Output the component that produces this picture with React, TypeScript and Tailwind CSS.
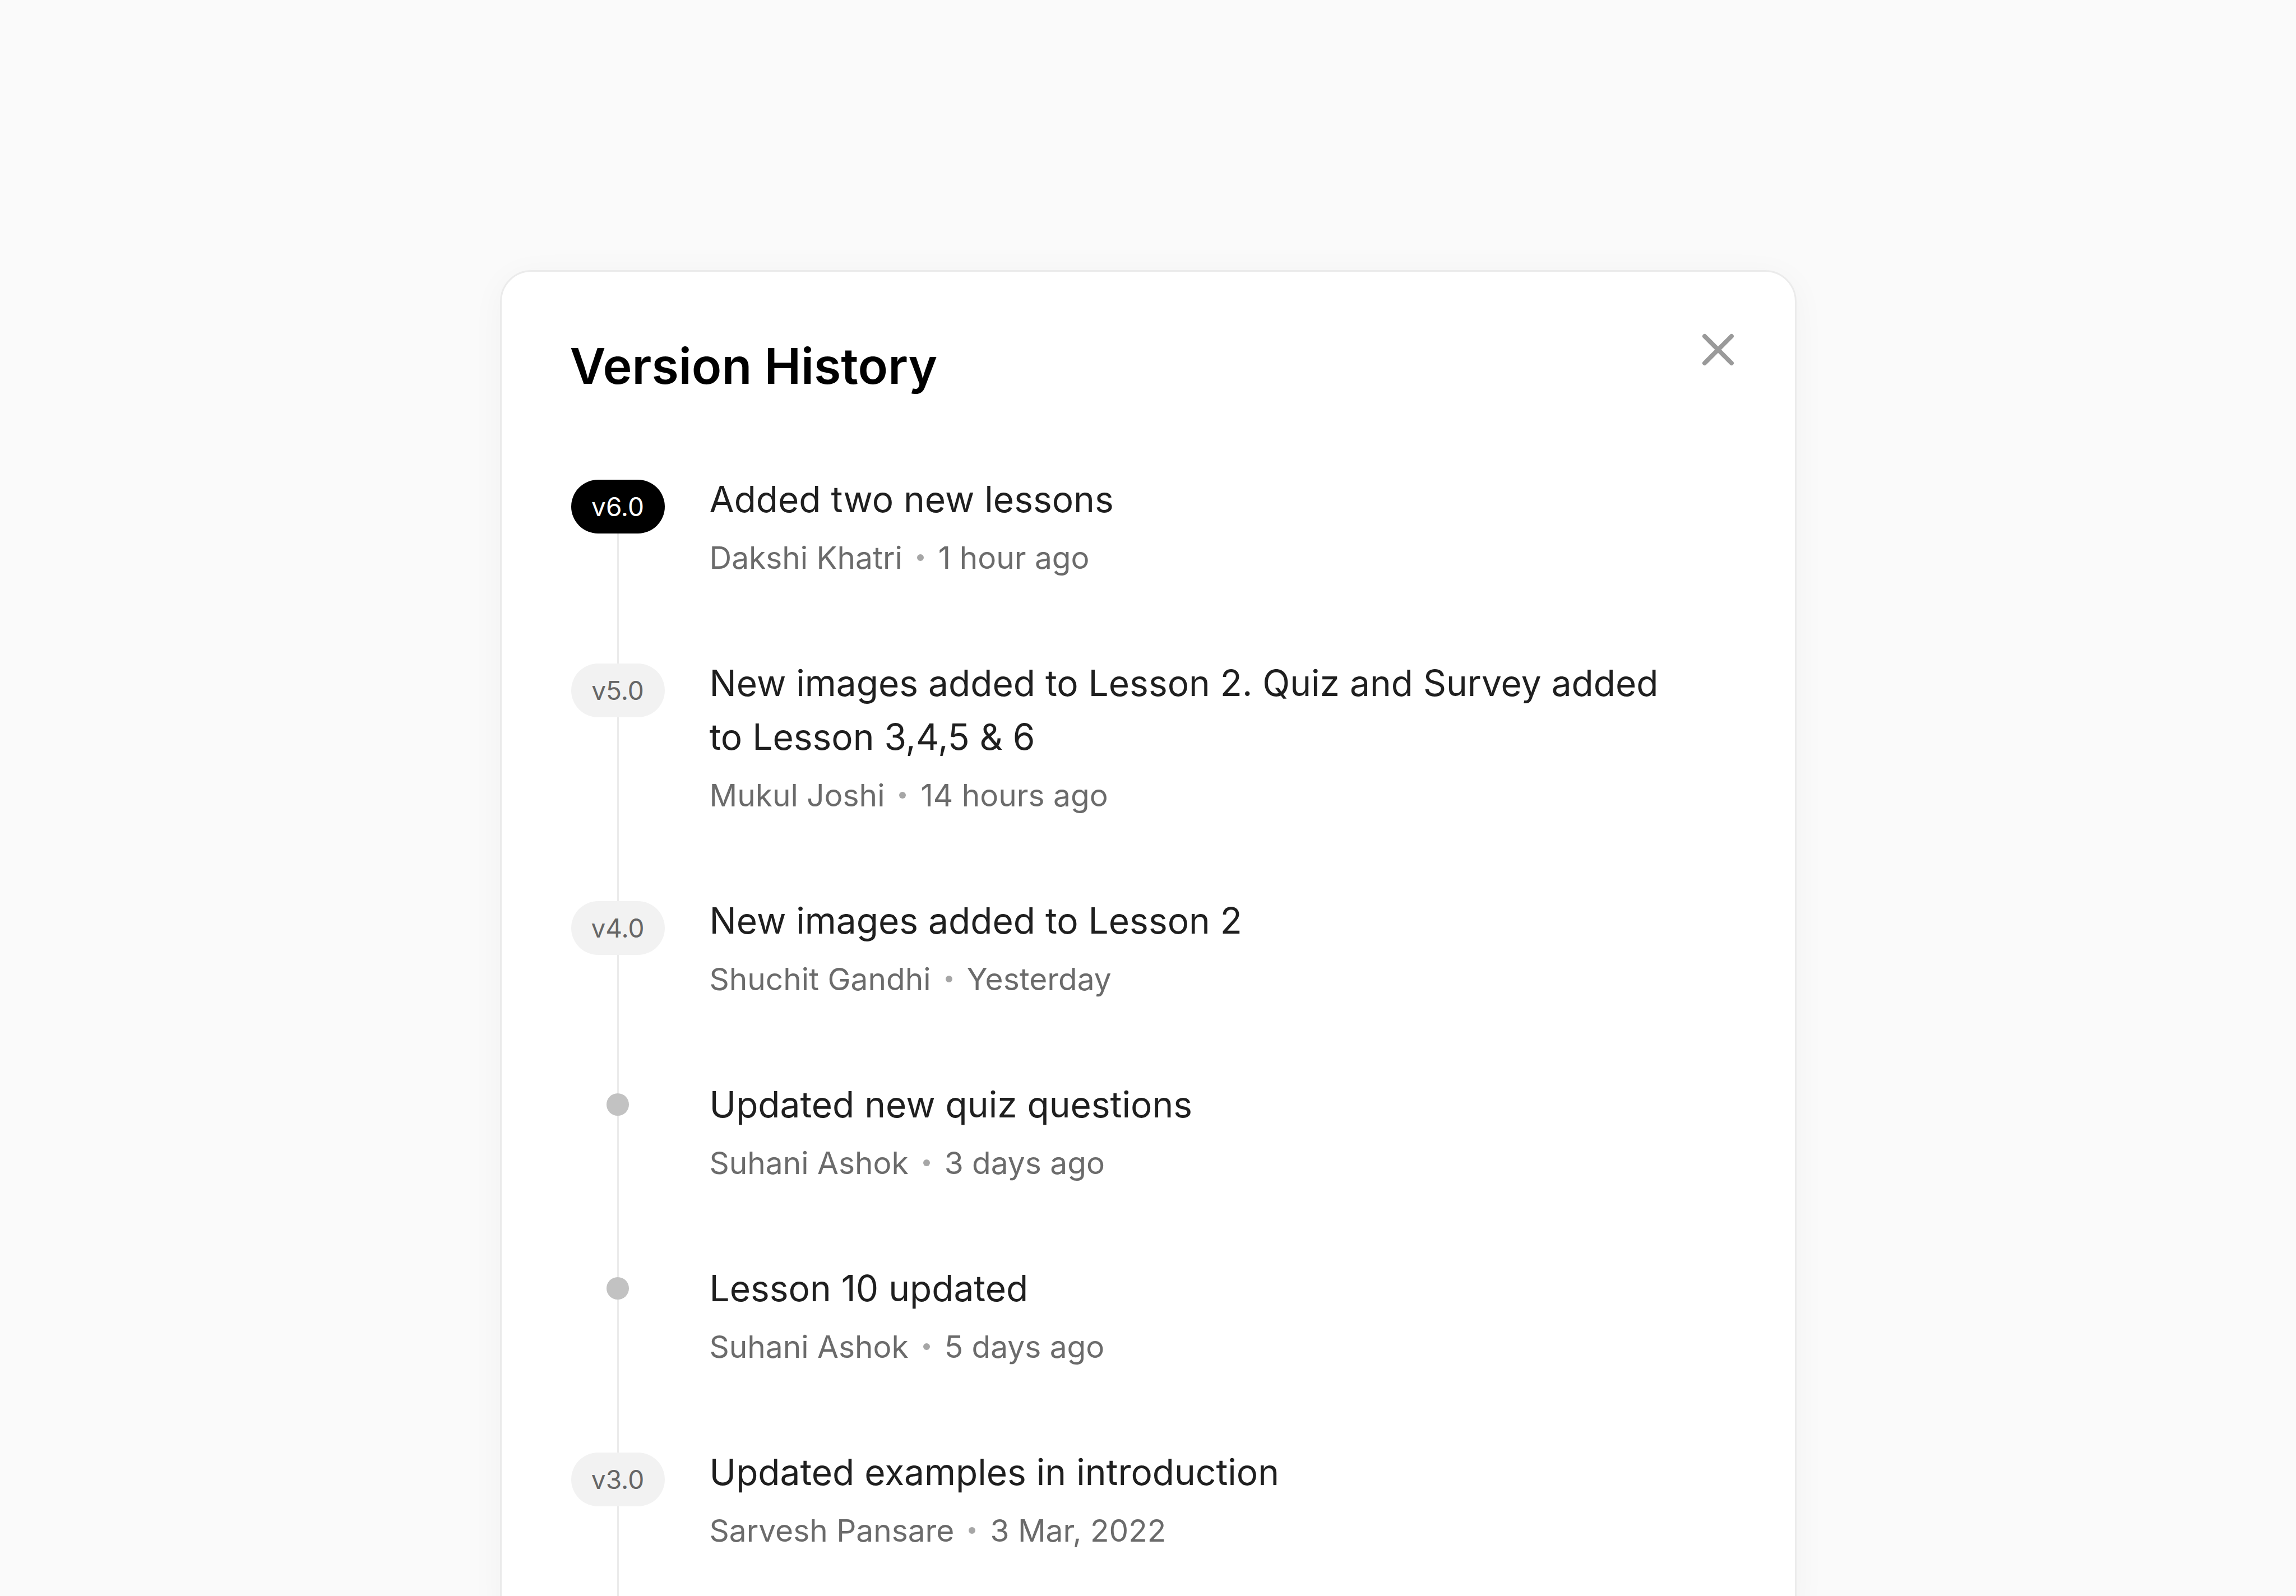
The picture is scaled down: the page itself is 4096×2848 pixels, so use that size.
import React from 'react';
import { X } from 'lucide-react';

type Entry = {
  version?: string;
  current?: boolean;
  title: string;
  author: string;
  when: string;
};

const entries: Entry[] = [
  { version: 'v6.0', current: true, title: 'Added two new lessons', author: 'Dakshi Khatri', when: '1 hour ago' },
  {
    version: 'v5.0',
    title: 'New images added to Lesson 2. Quiz and Survey added to Lesson 3,4,5 & 6',
    author: 'Mukul Joshi',
    when: '14 hours ago',
  },
  { version: 'v4.0', title: 'New images added to Lesson 2', author: 'Shuchit Gandhi', when: 'Yesterday' },
  { title: 'Updated new quiz questions', author: 'Suhani Ashok', when: '3 days ago' },
  { title: 'Lesson 10 updated', author: 'Suhani Ashok', when: '5 days ago' },
  { version: 'v3.0', title: 'Updated examples in introduction', author: 'Sarvesh Pansare', when: '3 Mar, 2022' },
];

const Marker: React.FC<{ entry: Entry }> = ({ entry }) => {
  if (!entry.version) {
    return <div className="h-[40px] w-[40px] shrink-0 rounded-full bg-[#c2c2c2]" />;
  }
  return (
    <div
      className={
        entry.current
          ? 'flex h-[96px] w-[167px] shrink-0 items-center justify-center rounded-full bg-black text-[46px] text-white'
          : 'flex h-[96px] w-[167px] shrink-0 items-center justify-center rounded-full bg-[#f2f2f2] text-[46px] text-[#666666]'
      }
    >
      {entry.version}
    </div>
  );
};

const TimelineItem: React.FC<{ entry: Entry; first: boolean }> = ({ entry, first }) => {
  const topGap = entry.version ? 'h-[13px]' : 'h-[28px]';
  return (
    <div className="flex">
      {/* marker column with the rail */}
      <div className="flex w-[171px] shrink-0 flex-col items-center">
        <div className={`${topGap} w-[3px] ${first ? 'bg-transparent' : 'bg-[#ebebeb]'}`} />
        <Marker entry={entry} />
        <div className="w-[3px] flex-1 bg-[#ebebeb]" />
      </div>

      {/* text */}
      <div className="ml-[78px] w-[1720px] pb-[136px]">
        <p className="text-[64px] leading-[96px] text-[#1f1f1f]">{entry.title}</p>
        <div className="mt-[16px] flex items-center gap-[26px] text-[55px] leading-[80px] text-[#6b6b6b]">
          <span>{entry.author}</span>
          <span className="h-[12px] w-[12px] rounded-full bg-[#a6a6a6]" />
          <span>{entry.when}</span>
        </div>
      </div>
    </div>
  );
};

const App: React.FC = () => {
  return (
    <div className="min-h-screen overflow-hidden bg-[#fafafa] pt-[482px] font-['Inter','Liberation_Sans',sans-serif]">
      <div className="mx-auto w-[2313px] rounded-[56px] border-[3px] border-[#ebebeb] bg-white pl-[122px] pr-[122px] pt-[115px] shadow-[0_10px_60px_rgba(0,0,0,0.04)]">
        {/* header */}
        <div className="flex items-start justify-between">
          <h1 className="text-[88px] font-semibold leading-[106px] text-black">Version History</h1>
          <button className="-mr-[33px] -mt-[24px] text-[#9a9a9a]">
            <X size={96} strokeWidth={2} />
          </button>
        </div>

        {/* timeline */}
        <div className="mt-[137px]">
          {entries.map((entry, i) => (
            <TimelineItem key={i} entry={entry} first={i === 0} />
          ))}
        </div>
      </div>
    </div>
  );
};

export default App;
